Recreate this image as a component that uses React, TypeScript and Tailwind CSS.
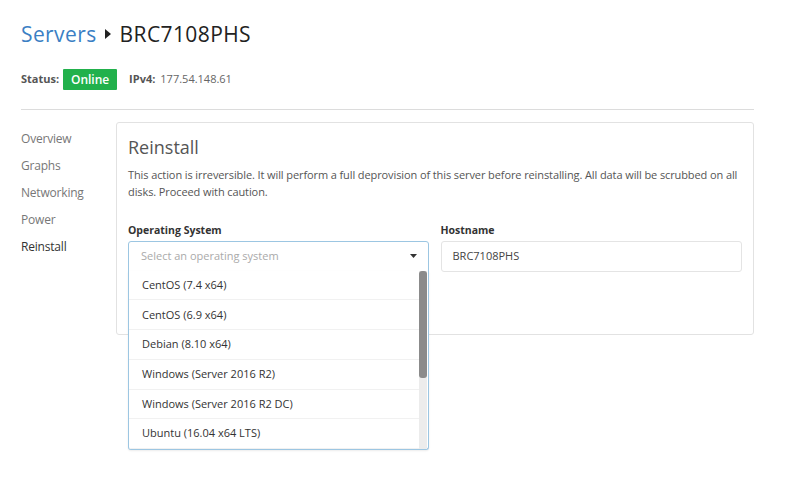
const navItems = ["Overview", "Graphs", "Networking", "Power", "Reinstall"];

const osOptions = [
  "CentOS (7.4 x64)",
  "CentOS (6.9 x64)",
  "Debian (8.10 x64)",
  "Windows (Server 2016 R2)",
  "Windows (Server 2016 R2 DC)",
  "Ubuntu (16.04 x64 LTS)",
];

const SideNav = () => {
  return (
    <ul className="w-[95px] shrink-0 pt-[9px] flex flex-col gap-[11px]">
      {navItems.map((item) => (
        <li
          key={item}
          className={`text-[12px] leading-[16px] tracking-[-0.2px] ${
            item === "Reinstall" ? "text-[#333]" : "text-[#777]"
          }`}
        >
          {item}
        </li>
      ))}
    </ul>
  );
};

const OsSelect = () => {
  return (
    <div className="relative">
      <div className="h-[31px] border border-[#9cc6e2] rounded-t-[3px] flex items-center justify-between pl-[12px] pr-[11px] bg-white">
        <span className="text-[11px] text-[#aaa]">Select an operating system</span>
        <svg width="7" height="4" viewBox="0 0 7 4">
          <path d="M0 0h7L3.5 4z" fill="#333" />
        </svg>
      </div>
      <div className="absolute left-0 right-0 top-[30px] h-[179px] bg-white border border-t-0 border-[#9cc6e2] rounded-b-[3px] shadow-[0_1px_2px_rgba(0,0,0,0.08)] flex overflow-hidden z-10">
        <ul className="flex-1">
          {osOptions.map((os) => (
            <li
              key={os}
              className="h-[29.7px] flex items-center px-[13px] text-[11px] text-[#333] border-b border-[#f1f1f1]"
            >
              {os}
            </li>
          ))}
        </ul>
        <div className="w-[8px] mr-[1px] bg-[#ececec] flex flex-col">
          <div className="h-[107px] bg-[#8b8b8b] rounded-[3px]" />
        </div>
      </div>
    </div>
  );
};

export default function App() {
  return (
    <div
      className="w-[800px] h-[493px] bg-white px-[21px] pt-[20px]"
      style={{ fontFamily: "'Open Sans', 'Liberation Sans', sans-serif" }}
    >
      <h1 className="flex items-center text-[21px] leading-[28px] tracking-[0.4px]">
        <span className="text-[#3b7fc4]">Servers</span>
        <svg width="7" height="10" viewBox="0 0 7 10" className="mx-[8px]">
          <path d="M0 0l6 5-6 5z" fill="#222" />
        </svg>
        <span className="text-[#222]">BRC7108PHS</span>
      </h1>

      <div className="mt-[21px] flex items-center text-[11px]">
        <span className="font-bold text-[#555]">Status:</span>
        <span className="ml-[4px] h-[21px] w-[54px] bg-[#22b14c] text-white font-semibold text-[12px] flex items-center justify-center rounded-[1px]">
          Online
        </span>
        <span className="ml-[12px] font-bold text-[#555]">IPv4:</span>
        <span className="ml-[5px] text-[#666]">177.54.148.61</span>
      </div>

      <div className="mt-[19px] w-[733px] border-t border-[#dcdcdc]" />

      <div className="flex mt-[12px]">
        <SideNav />
        <div className="w-[638px] h-[213px] border border-[#e2e2e2] rounded-[3px] px-[11px] pt-[12px]">
          <h2 className="text-[18px] leading-[24px] text-[#555]">Reinstall</h2>
          <p className="mt-[7px] -mr-[6px] text-[11px] leading-[17px] text-[#555] tracking-[-0.1px]">
            This action is irreversible. It will perform a full deprovision of this server before
            reinstalling. All data will be scrubbed on all disks. Proceed with caution.
          </p>
          <div className="mt-[23px] flex gap-[12px]">
            <div className="w-[301px]">
              <div className="text-[10.5px] font-bold text-[#333] mb-[2px]">Operating System</div>
              <OsSelect />
            </div>
            <div className="w-[302px]">
              <div className="text-[10.5px] font-bold text-[#333] mb-[2px]">Hostname</div>
              <div className="h-[31px] border border-[#e4e4e4] rounded-[3px] flex items-center px-[11px] text-[11px] text-[#444]">
                BRC7108PHS
              </div>
            </div>
          </div>
        </div>
      </div>
    </div>
  );
}
